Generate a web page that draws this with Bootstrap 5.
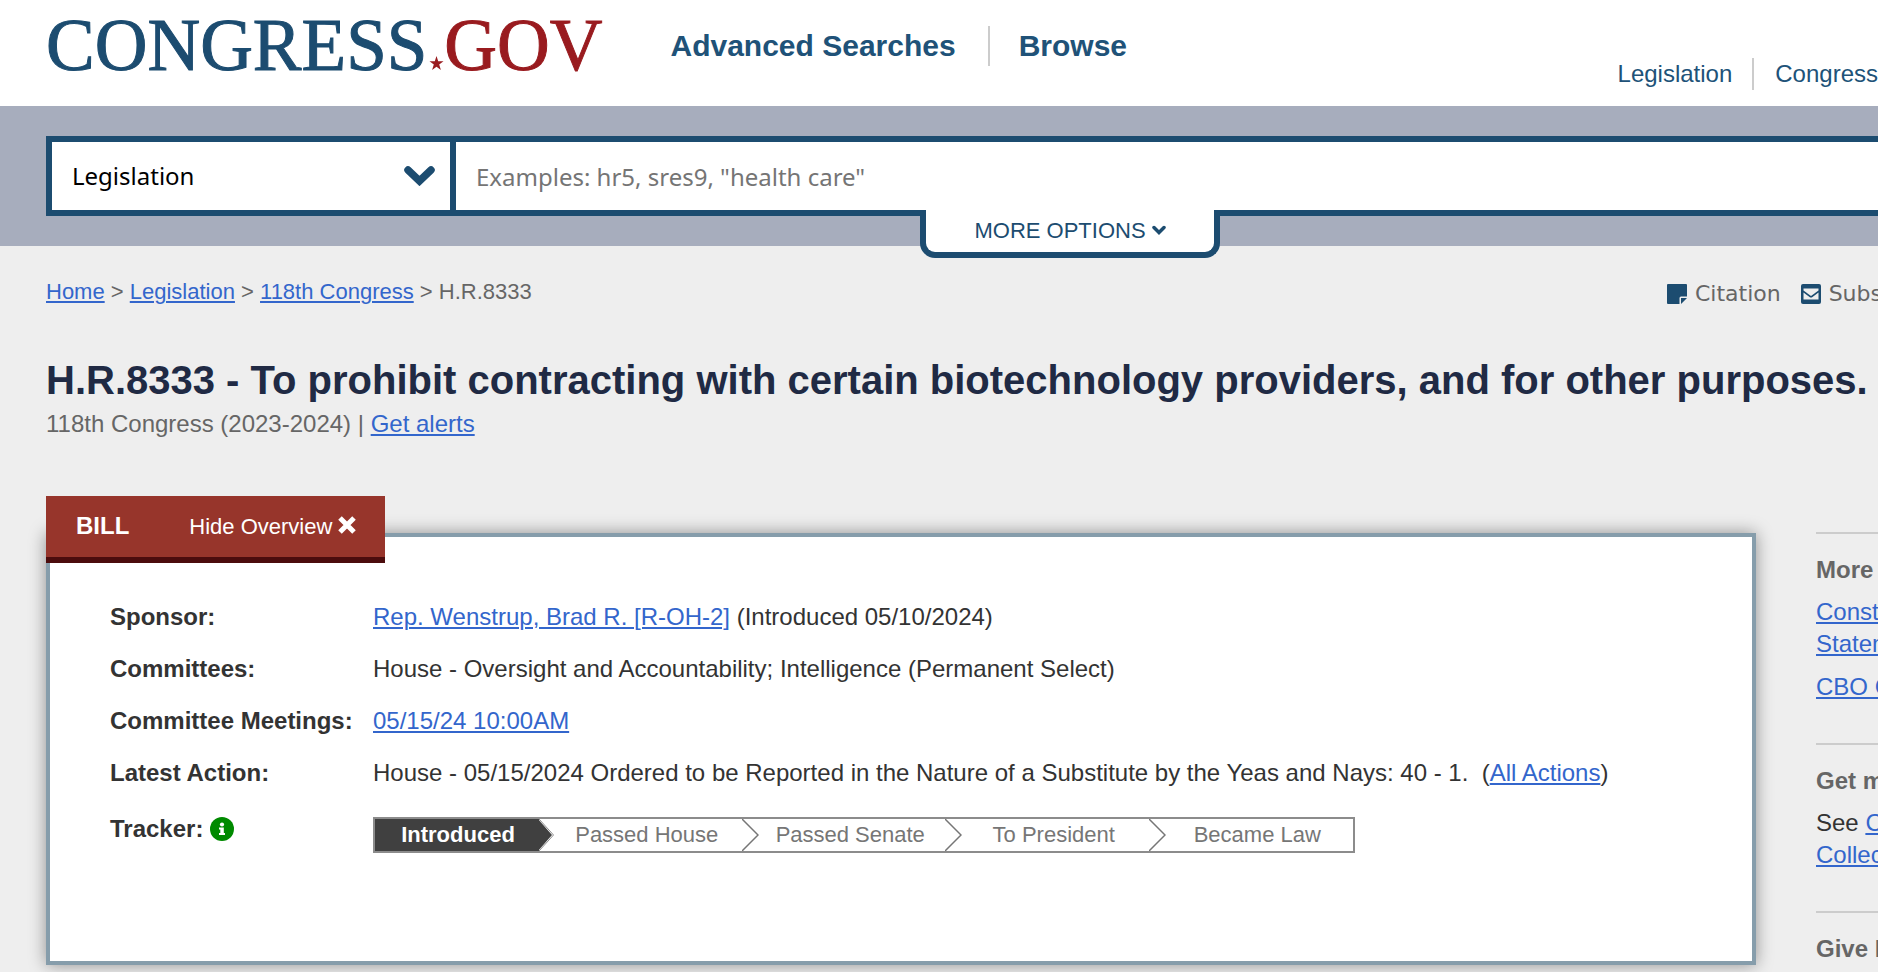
<!DOCTYPE html>
<html lang="en">
<head>
<meta charset="utf-8">
<meta name="viewport" content="width=device-width, initial-scale=1">
<title>H.R.8333 - Congress.gov</title>
<link href="https://cdn.jsdelivr.net/npm/bootstrap@5.3.0/dist/css/bootstrap.min.css" rel="stylesheet">
<style>
:root{--navy:#1c4c70;--link:#36c;--rule:#ccc}
body{background:#eee;color:#333;font:24px/32px "Liberation Sans",Arial,sans-serif;min-height:100vh;overflow-x:hidden}
a{color:var(--link);text-decoration-thickness:2px;text-underline-offset:2px}
.gutter{padding-left:46px}
.site-header{padding-bottom:16px}
.logo{font:73px/72px "Liberation Serif",serif;color:var(--navy);padding:10px 0 8px;-webkit-text-stroke:1px currentColor}
.logo .gov{color:#991b1f}
.logo svg{width:15px;height:14px;margin:0 0 0 2px;vertical-align:baseline}
.site-header nav a{color:#205278;text-decoration:none}
.main-nav{font-size:30px;line-height:40px;font-weight:700;margin:26px 0 0 68px}
.main-nav li+li{border-left:2px solid var(--rule);margin-left:32px;padding-left:29px}
.sub-nav li+li{border-left:2px solid var(--rule);margin-left:20px;padding-left:21px}
.search-band{background:#a7adbd;padding-top:30px;padding-bottom:30px}
.search-bar{border:6px solid var(--navy);border-right:0;background:#fff;height:80px}
.search-bar .form-select,.search-bar .form-control{border:0;border-radius:0;font:24px/32px "Noto Sans","Open Sans",sans-serif;background:#fff;color:#000;height:100%}
.search-bar .form-select{padding:0 60px 0 20px}
.search-bar .form-control{padding:0 20px}
.search-bar .form-control::placeholder{color:#757575;opacity:1}
.scope{width:404px;border-right:6px solid var(--navy);box-sizing:border-box}
.scope svg{position:absolute;right:15px;top:24px;width:31px;height:20px;pointer-events:none}
.more-options{position:absolute;left:calc(50% - 45px);top:68px;width:300px;height:48px;border:6px solid var(--navy);border-top:0;border-radius:0 0 15px 15px;background:#fff;color:var(--navy);font-size:22px;line-height:32px;padding:5px 0;z-index:2}
.more-options svg{width:14px;height:10px;margin:0 0 4px 6px}
.crumb-row{padding-top:30px}
.crumbs{font-size:22px;color:#666}
.tools{font-family:"DejaVu Sans",Verdana,sans-serif;font-size:22px;padding-top:2px;margin-right:-4px}
.tools a{color:#666;text-decoration:none}
.tools svg{width:20px;height:20px}
.page-title{font-size:40px;line-height:48px;font-weight:700;color:#202a44;margin:46px 0 4px}
.session{color:#666;margin-bottom:56px}
.bill-tab{width:339px;line-height:60px;background:#97352b;border-bottom:6px solid #4c0c0d;color:#fff;margin-bottom:-30px;padding-left:30px;z-index:1}
.bill-tab button{color:#fff;font-size:22px;line-height:60px;margin-left:60px}
.bill-tab svg{width:18px;height:18px;margin:0 0 6px 6px}
.overview{background:#fff;border:4px solid #869dab;box-shadow:0 0 16px rgba(0,0,0,.4);padding:54px 60px 108px}
.overview th{width:263px;padding:10px 0;white-space:nowrap}
.overview td{padding:10px 0}
.overview .track th{padding:14px 0 0}
.overview .track td{padding:18px 0 0}
.overview svg.info{width:24px;height:24px;margin:0 0 3px}
.tracker{width:982px;max-width:100%;border:2px solid #8c8c8c;font-size:22px;color:#767676}
.tracker li{flex:1 1 0;padding-left:12px;position:relative;text-align:center}
.tracker li.done{flex:0 0 164px;padding-left:2px;background:#404040;color:#fff;font-weight:700}
.tracker svg{position:absolute;right:-16px;top:0;width:17px;height:32px;z-index:1}
.side{width:62px;margin-top:36px}
.side section{border-top:2px solid var(--rule);padding:20px 0 40px;white-space:nowrap;overflow:hidden}
.side section:last-child{padding-bottom:0}
.side h2{font-size:24px;line-height:32px;font-weight:700;color:#666;margin-bottom:10px}
.side li+li{margin-top:11px}
.content-row{gap:60px;padding-bottom:8px}
</style>
</head>
<body>
<header class="site-header bg-white gutter d-flex align-items-start">
  <a class="logo text-decoration-none text-nowrap" href="#">CONGRESS<svg viewBox="0 0 15 14" aria-hidden="true"><path fill="#991b1f" d="M7.500 0 9.200 5.200H14.500L10.200 8.500 11.900 14 7.500 10.700 3.100 14 4.800 8.500.5 5.200H5.800Z"/></svg><span class="gov">GOV</span></a>
  <nav aria-label="Main"><ul class="main-nav list-unstyled d-flex mb-0 text-nowrap">
    <li><a href="#">Advanced Searches</a></li>
    <li><a href="#">Browse</a></li>
  </ul></nav>
  <nav class="ms-auto align-self-end" aria-label="Quick links"><ul class="sub-nav list-unstyled d-flex mb-0 text-nowrap">
    <li><a href="#">Legislation</a></li>
    <li><a href="#">Congress</a></li>
  </ul></nav>
</header>

<form class="search-band gutter">
  <div class="search-bar d-flex position-relative">
    <div class="scope position-relative flex-shrink-0">
      <select class="form-select" aria-label="Search in"><option>Legislation</option></select>
      <svg viewBox="0 0 31 20" aria-hidden="true"><path fill="none" stroke="#1c4c70" stroke-width="7.500" stroke-linecap="round" d="M4 4 15.500 15 27 4"/></svg>
    </div>
    <input class="form-control" type="text" aria-label="Search terms" placeholder="Examples: hr5, sres9, &quot;health care&quot;">
    <button class="more-options" type="button">MORE OPTIONS<svg viewBox="0 0 14 10" aria-hidden="true"><path fill="none" stroke="#1c4c70" stroke-width="3.500" stroke-linecap="round" d="M2 2.500 7 7.500 12 2.500"/></svg></button>
  </div>
</form>

<main class="gutter">
  <div class="crumb-row d-flex justify-content-between">
    <nav class="crumbs text-nowrap" aria-label="Breadcrumb"><a href="#">Home</a> &gt; <a href="#">Legislation</a> &gt; <a href="#">118th Congress</a> &gt; H.R.8333</nav>
    <div class="tools d-flex text-nowrap">
      <a href="#" class="d-flex align-items-center gap-2 me-3"><svg viewBox="0 0 20 20" aria-hidden="true"><path fill="#1c4c70" d="M1 0H19Q20 0 20 1V12.500H14Q12.500 12.500 12.500 14V20H1Q0 20 0 19V1Q0 0 1 0ZM14 14H20L14 20Z"/></svg>Citation</a>
      <a href="#" class="d-flex align-items-center gap-2 ms-1"><svg viewBox="0 0 20 20" aria-hidden="true"><rect width="20" height="20" rx="2" fill="#1c4c70"/><path fill="#eee" d="M2.500 4.500H17.500V6.500L10 12 2.500 6.500Z"/><path fill="#eee" d="M2.500 8.500 8.500 13Q10 14 11.500 13L17.500 8.500V15.500H2.500Z"/></svg>Subs</a>
    </div>
  </div>

  <h1 class="page-title text-nowrap">H.R.8333 - To prohibit contracting with certain biotechnology providers, and for other purposes.</h1>
  <p class="session">118th Congress (2023-2024) | <a href="#">Get alerts</a></p>

  <div class="content-row d-flex align-items-start">
    <div class="flex-grow-1">
      <div class="bill-tab position-relative d-flex align-items-baseline text-nowrap">
        <strong>BILL</strong>
        <button class="border-0 bg-transparent p-0" type="button">Hide Overview<svg viewBox="0 0 18 18" aria-hidden="true"><path fill="none" stroke="#fff" stroke-width="5" d="M2 2 16 16M16 2 2 16"/></svg></button>
      </div>
      <div class="overview">
        <table class="w-100">
          <tr><th scope="row">Sponsor:</th><td><a href="#">Rep. Wenstrup, Brad R. [R-OH-2]</a> (Introduced 05/10/2024)</td></tr>
          <tr><th scope="row">Committees:</th><td>House - Oversight and Accountability; Intelligence (Permanent Select)</td></tr>
          <tr><th scope="row">Committee Meetings:</th><td><a href="#">05/15/24 10:00AM</a></td></tr>
          <tr><th scope="row">Latest Action:</th><td>House - 05/15/2024 Ordered to be Reported in the Nature of a Substitute by the Yeas and Nays: 40 - 1.&nbsp; (<a href="#">All Actions</a>)</td></tr>
          <tr class="track align-top"><th scope="row">Tracker: <svg class="info" viewBox="0 0 24 24" aria-hidden="true"><circle cx="12" cy="12" r="12" fill="#008a00"/><circle cx="12" cy="7.500" r="2.100" fill="#fff"/><path fill="#fff" d="M9 10.500H13.800V16H15V18H9V16H10.300V12.500H9Z"/></svg></th>
          <td><ol class="tracker list-unstyled d-flex mb-0 text-nowrap">
            <li class="done">Introduced<svg viewBox="0 0 17 32" aria-hidden="true"><path fill="#404040" d="M0 0 14 16 0 32Z"/><path fill="none" stroke="#8c8c8c" d="M1 0 15.500 16 1 32"/></svg></li>
            <li>Passed House<svg viewBox="0 0 17 32" aria-hidden="true"><path fill="none" stroke="#767676" stroke-width="1.500" d="M0 0 16 16 0 32"/></svg></li>
            <li>Passed Senate<svg viewBox="0 0 17 32" aria-hidden="true"><path fill="none" stroke="#767676" stroke-width="1.500" d="M0 0 16 16 0 32"/></svg></li>
            <li>To President<svg viewBox="0 0 17 32" aria-hidden="true"><path fill="none" stroke="#767676" stroke-width="1.500" d="M0 0 16 16 0 32"/></svg></li>
            <li>Became Law</li>
          </ol></td></tr>
        </table>
      </div>
    </div>
    <aside class="side flex-shrink-0">
      <section>
        <h2>More</h2>
        <ul class="list-unstyled mb-0"><li><a href="#">Const<br>Statem</a></li><li><a href="#">CBO C</a></li></ul>
      </section>
      <section>
        <h2>Get m</h2>
        <p class="mb-0">See <a href="#">C<br>Collec</a></p>
      </section>
      <section><h2 class="mb-0">Give F</h2></section>
    </aside>
  </div>
</main>
<script src="https://cdn.jsdelivr.net/npm/bootstrap@5.3.0/dist/js/bootstrap.bundle.min.js"></script>
</body>
</html>
